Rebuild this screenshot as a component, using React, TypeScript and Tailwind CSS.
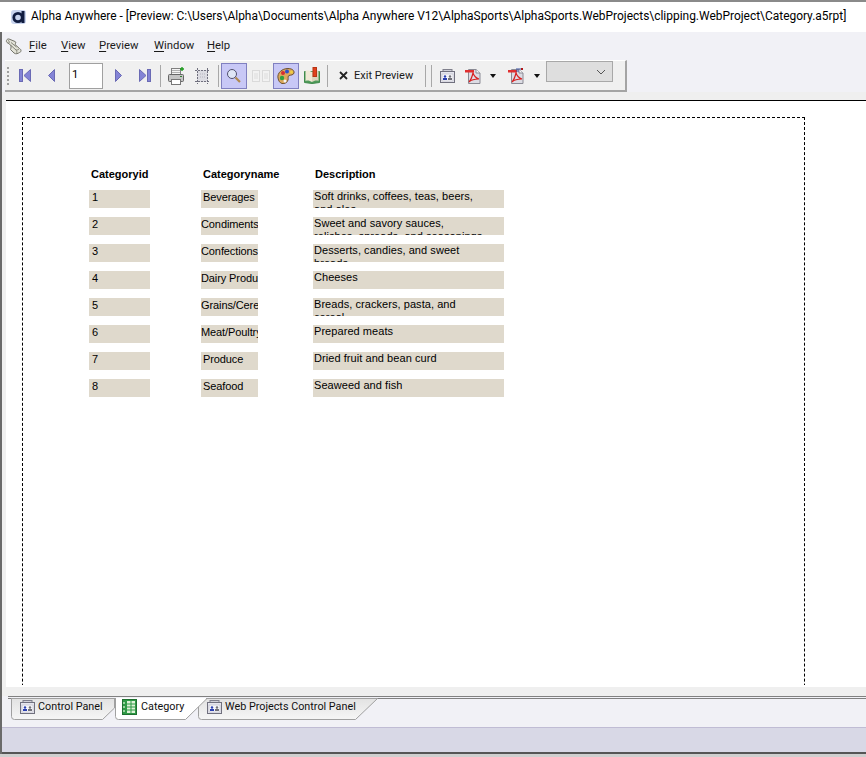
import React from "react";

const ui = "font-['Roboto','Noto_Sans',sans-serif] text-[11.3px] text-[#1a1a1a]";

function First() {
  return (
    <svg width="12" height="13" viewBox="0 0 12 13">
      <rect x="0.5" y="0.5" width="3" height="12" fill="#8484d6" stroke="#6a6ab4" />
      <path d="M11.5 0.5V12.5L5 6.5Z" fill="#8484d6" stroke="#6a6ab4" />
    </svg>
  );
}
function Last() {
  return (
    <svg width="12" height="13" viewBox="0 0 12 13">
      <rect x="8.5" y="0.5" width="3" height="12" fill="#8484d6" stroke="#6a6ab4" />
      <path d="M0.5 0.5V12.5L7 6.5Z" fill="#8484d6" stroke="#6a6ab4" />
    </svg>
  );
}
function Prev() {
  return (
    <svg width="7" height="13" viewBox="0 0 7 13">
      <path d="M6.5 0.5V12.5L0.5 6.5Z" fill="#8484d6" stroke="#6a6ab4" />
    </svg>
  );
}
function Next() {
  return (
    <svg width="7" height="13" viewBox="0 0 7 13">
      <path d="M0.5 0.5V12.5L6.5 6.5Z" fill="#8484d6" stroke="#6a6ab4" />
    </svg>
  );
}
function Sep() {
  return <div className="w-[1px] h-[22px] bg-[#a8a8a8]" />;
}
function Printer() {
  return (
    <svg width="17" height="18" viewBox="0 0 17 18">
      <rect x="3.5" y="1.5" width="9" height="6" fill="#f4f4f4" stroke="#808080" />
      <path d="M4 3.5h8M4 5.5h8" stroke="#b0b0b0" />
      <rect x="0.5" y="7.5" width="15" height="7" rx="1" fill="#c4c4c4" stroke="#666" />
      <rect x="3.5" y="12.5" width="9" height="5" fill="#fff" stroke="#777" />
      <rect x="12" y="9" width="2" height="1" fill="#2f7f2f" />
      <path d="M14 0v4M12 2h4" stroke="#1c9a1c" strokeWidth="1.4" />
    </svg>
  );
}
function Bounds() {
  return (
    <svg width="15" height="16" viewBox="0 0 15 16">
      <rect x="2" y="2" width="11" height="12" fill="#dcdce2" />
      <path d="M2.5 0v16M12.500 0v16M0 2.500h15M0 13.500h15" stroke="#70707e" strokeDasharray="2 1" />
      <path d="M5 6h5M5 9h5" stroke="#b4b4c0" strokeDasharray="1 1" />
    </svg>
  );
}
function Magnifier() {
  return (
    <svg width="16" height="16" viewBox="0 0 16 16">
      <circle cx="6" cy="6" r="4.5" fill="#dfe6f6" stroke="#50506e" />
      <path d="M9.5 9.5L14 14" stroke="#b08a50" strokeWidth="2.2" />
    </svg>
  );
}
function Pages() {
  return (
    <svg width="18" height="12" viewBox="0 0 18 12">
      <g fill="#f2f2f2" stroke="#dadada">
        <rect x="0.5" y="0.5" width="7" height="11" />
        <rect x="10.5" y="0.5" width="7" height="11" />
      </g>
      <path d="M2 4h4M2 6h4M2 8h4M12 4h4M12 6h4M12 8h4" stroke="#dcdcdc" />
    </svg>
  );
}
function Palette() {
  return (
    <svg width="18" height="16" viewBox="0 0 18 16">
      <path d="M1 10C0 5 5 .5 11 .5c4 0 6.500 2 6 4.500-.5 2-3 2-5 2.500-1.500.5-.5 2.500-1 4.500-.5 2.500-3.500 4-6 3.500C3 15 1.500 13 1 10Z" fill="#dca85c" stroke="#6e5230" />
      <circle cx="10" cy="3.500" r="2" fill="#2f50c8" />
      <circle cx="6" cy="5" r="2" fill="#d43030" />
      <circle cx="14.500" cy="4" r="1.500" fill="#f0d040" />
      <circle cx="5" cy="10" r="2.200" fill="#30a040" />
      <circle cx="8" cy="13" r="1.500" fill="#f4f4f4" />
    </svg>
  );
}
function Book() {
  return (
    <svg width="16" height="17" viewBox="0 0 16 17">
      <path d="M0.500 4.500V15.500L8 16.500L15.500 15.500V4.500Z" fill="#4f9a5a" stroke="#3f8a4a" />
      <path d="M1.500 4C4 3 6 4 8 5V15C6 14 4 13 1.500 14Z" fill="#efe8d4" />
      <path d="M14.500 4C12 3 10 4 8 5V15C10 14 12 13 14.500 14Z" fill="#dcd4bc" />
      <rect x="9" y="0.500" width="3.500" height="9" fill="#e0401c" stroke="#b83414" />
    </svg>
  );
}
function Panel() {
  return (
    <svg className="shrink-0" width="15" height="14" viewBox="0 0 15 14">
      <rect x="3" y="0.500" width="9" height="3" fill="#d0d0d8" stroke="#80808c" />
      <rect x="0.500" y="2.500" width="14" height="11" fill="#e6e6ee" stroke="#70707e" />
      <rect x="2" y="5" width="11" height="7" fill="#f6f6fa" stroke="#b0b0bc" strokeWidth="0.5" />
      <circle cx="5" cy="7.500" r="1.200" fill="#2a3fb0" />
      <rect x="3" y="9" width="4" height="2" fill="#2a3fb0" />
      <circle cx="10" cy="7.500" r="1.200" fill="#707078" />
      <rect x="8" y="9" width="4" height="2" fill="#707078" />
    </svg>
  );
}
function Pdf({ mail }: { mail?: boolean }) {
  return (
    <svg width="16" height="16" viewBox="0 0 16 16">
      <path d="M3.500 1.500H11L15 5V15.500H3.500Z" fill="#dcdce4" stroke="#8a8a94" />
      <path d="M11 1.500V5H15" fill="#f8f8f8" stroke="#8a8a94" />
      <rect x="0" y="2" width="9" height="2.500" fill="#e03030" />
      <path d="M8 5C7 9 5 13 4 14c2-2 6-3 10-3-3-1-5-3-6-6Z" fill="none" stroke="#d82020" strokeWidth="1.200" />
      {mail && <path d="M8 1h5M8 3h3" stroke="#3a50a0" />}
      {mail && <rect x="13" y="0" width="2" height="2" fill="#b01818" />}
    </svg>
  );
}
function Caret() {
  return (
    <svg width="6" height="4" viewBox="0 0 6 4">
      <path d="M0 0H6L3 4Z" fill="#111" />
    </svg>
  );
}
function Scroll() {
  return (
    <svg className="shrink-0" width="17" height="17" viewBox="0 0 17 17">
      <path d="M2 4.500C0.500 3 2 0.500 4 1L10 3.500C11.500 4 10.500 5.500 10 6.500L14.500 10.500C16.500 11.500 16.500 14 14.500 14.500C13 15.500 11 16.500 9 15L5.500 11.500C6 10 6.500 8 5.500 7C4.500 6 3.500 5.500 2 4.500Z" fill="#e2e2d8" stroke="#74746a" />
      <path d="M3 2.500C4 2.500 4.500 3.500 4 5M6 4.500L11.500 9M5.500 7L11 12M14 11C13 12 12 12 11 12C12 13 12 14 11.500 15.500" stroke="#85857a" fill="none" />
    </svg>
  );
}
function Logo() {
  return (
    <svg className="shrink-0" width="15" height="14" viewBox="0 0 15 14">
      <rect x="0" y="0" width="15" height="14" rx="3" fill="#c8d4ee" />
      <circle cx="7" cy="7.500" r="4.200" fill="none" stroke="#101c40" strokeWidth="2.800" />
      <rect x="10.500" y="1" width="3" height="12" fill="#101c40" />
    </svg>
  );
}
function Sheet() {
  return (
    <svg className="shrink-0" width="15" height="16" viewBox="0 0 15 16">
      <rect x="0.500" y="0.500" width="14" height="15" fill="#2f9a46" stroke="#1e7030" />
      <rect x="5" y="2" width="8" height="12" fill="#dff2d8" />
      <path d="M5 5h8M5 8h8M5 11h8M9 2v12" stroke="#2f9a46" />
      <path d="M2 3v2M2 7v2M2 11v2" stroke="#bfe6bf" strokeWidth="1.500" />
    </svg>
  );
}

function Menu({ k, rest, className }: { k: string; rest: string; className: string }) {
  return (
    <span className={className}>
      <span className="underline underline-offset-2">{k}</span>
      {rest}
    </span>
  );
}

const rows: [string, string, string, string, string][] = [
  ["1", "Beverages", "Soft drinks, coffees, teas, beers,", "and ales", "pl-[2px]"],
  ["2", "Condiments", "Sweet and savory sauces,", "relishes, spreads, and seasonings", "pl-0"],
  ["3", "Confections", "Desserts, candies, and sweet", "breads", "pl-0"],
  ["4", "Dairy Products", "Cheeses", "", "pl-0"],
  ["5", "Grains/Cereals", "Breads, crackers, pasta, and", "cereal", "pl-0"],
  ["6", "Meat/Poultry", "Prepared meats", "", "pl-0"],
  ["7", "Produce", "Dried fruit and bean curd", "", "pl-[2px]"],
  ["8", "Seafood", "Seaweed and fish", "", "pl-[2px]"],
];

export default function App() {
  return (
    <div className={`w-[866px] h-[757px] overflow-hidden bg-[#cfcfcf] flex flex-col ${ui}`}>
      <div className="h-[2px] bg-[#8a8a8a] shrink-0" />
      {/* title bar */}
      <div className="h-[30px] bg-white flex items-center pl-[11px] shrink-0">
        <Logo />
        <span className="ml-[5px] text-[11.950px] whitespace-nowrap text-black">
          Alpha Anywhere - [Preview: C:\Users\Alpha\Documents\Alpha Anywhere V12\AlphaSports\AlphaSports.WebProjects\clipping.WebProject\Category.a5rpt]
        </span>
      </div>
      <div className="flex flex-col border-l-2 border-[#6a6a6a] h-[722px] shrink-0">
        {/* menu */}
        <div className="h-[28px] bg-[#f1f1f6] flex items-center pl-[3px] shrink-0">
          <Scroll />
          <Menu k="F" rest="ile" className="ml-[7px] w-[32px]" />
          <Menu k="V" rest="iew" className="w-[38px]" />
          <Menu k="P" rest="review" className="w-[55px]" />
          <Menu k="W" rest="indow" className="w-[53px]" />
          <Menu k="H" rest="elp" className="" />
        </div>
        {/* toolbar row */}
        <div className="h-[32px] bg-[#f1f1f6] shrink-0 pl-[3px]">
          <div className="w-[622px] h-[32px] bg-[#f0f0f0] border-t border-r-2 border-b-2 border-[#a4a4a4] border-t-white flex items-center pl-[2px]">
            <div className="w-[2px] h-[18px] border-l-2 border-dotted border-[#a0a0a0]" />
            <div className="ml-[10px]"><First /></div>
            <div className="ml-[17px]"><Prev /></div>
            <div className="ml-[14px] w-[34px] h-[26px] bg-white border border-[#a0a0a0] flex items-center pl-[2px] text-black">1</div>
            <div className="ml-[12px]"><Next /></div>
            <div className="ml-[17px]"><Last /></div>
            <div className="ml-[9px]"><Sep /></div>
            <div className="ml-[7px]"><Printer /></div>
            <div className="ml-[10px]"><Bounds /></div>
            <div className="ml-[8px]"><Sep /></div>
            <div className="ml-[2px] w-[26px] h-[26px] bg-[#c8c8f6] border border-[#8080c0] flex items-center justify-center"><Magnifier /></div>
            <div className="ml-[5px]"><Pages /></div>
            <div className="ml-[3px] w-[26px] h-[26px] bg-[#c8c8f6] border border-[#8080c0] flex items-center justify-center"><Palette /></div>
            <div className="ml-[5px]"><Book /></div>
            <div className="ml-[7px]"><Sep /></div>
            <svg className="ml-[11px]" width="9" height="9" viewBox="0 0 9 9">
              <path d="M1 1L8 8M8 1L1 8" stroke="#222" strokeWidth="1.800" />
            </svg>
            <span className="ml-[6px] pt-px w-[60px] whitespace-nowrap text-[11px]">Exit Preview</span>
            <div className="ml-[11px]"><Sep /></div>
            <div className="ml-[5px]"><Sep /></div>
            <div className="ml-[8px]"><Panel /></div>
            <div className="ml-[10px]"><Pdf /></div>
            <div className="ml-[9px]"><Caret /></div>
            <div className="ml-[12px]"><Pdf mail /></div>
            <div className="ml-[10px]"><Caret /></div>
            <div className="ml-[6px] mb-[8px] w-[67px] h-[21px] bg-[#dedede] border border-[#a8a8a8] flex items-center justify-end pr-[6px]">
              <svg width="10" height="6" viewBox="0 0 10 6">
                <path d="M1 1L5 5L9 1" fill="none" stroke="#555" />
              </svg>
            </div>
          </div>
        </div>
        <div className="h-[8px] bg-[#efefef] shrink-0" />
        {/* page */}
        <div className="h-[587px] shrink-0 flex bg-[#f0f0f0]">
          <div className="w-[4px] shrink-0" />
          <div className="flex-1 bg-white border-t border-black">
            <div className="h-[584px] overflow-hidden pl-[16px] pt-[16px]">
              <div className="w-[783px] h-[700px] border border-dashed border-black pl-[66px] pt-[50px] font-['Liberation_Sans',Arial,sans-serif] text-[11px] leading-[13px] text-black">
                <div className="grid grid-cols-[112px_112px_191px] h-[12px] font-bold pl-[2px]">
                  <span>Categoryid</span>
                  <span>Categoryname</span>
                  <span>Description</span>
                </div>
                <div className="mt-[10px] flex flex-col gap-[9px]">
                  {rows.map((r) => (
                    <div key={r[0]} className="grid grid-cols-[112px_112px_191px] h-[18px]">
                      <div className="w-[61px] h-[18px] bg-[#dfd9cc] pl-[3px] pt-px overflow-hidden">{r[0]}</div>
                      <div className={`w-[57px] h-[18px] bg-[#dfd9cc] pt-px overflow-hidden whitespace-nowrap tracking-[-0.100px] ${r[4]}`}>{r[1]}</div>
                      <div className="h-[18px] bg-[#dfd9cc] pl-[1px] overflow-hidden tracking-[0.060px]">
                        <div className="whitespace-nowrap">{r[2]}</div>
                        <div className="whitespace-nowrap">{r[3]}</div>
                      </div>
                    </div>
                  ))}
                </div>
              </div>
            </div>
          </div>
        </div>
        {/* strip + tabs */}
        <div className="h-[9px] bg-[#efefef] shrink-0" />
        <div className="h-[31px] bg-[#f1f1f6] relative shrink-0 text-[10.800px]">
          <div className="h-[1px] bg-[#808080] ml-[6px]" />
          <div className="h-[1px] mt-[1px] bg-[#808080] ml-[6px]" />
          <svg className="absolute left-[-2px] top-0" width="400" height="26" viewBox="0 0 400 26">
            <defs>
              <linearGradient id="t" x1="0" y1="0" x2="0" y2="1">
                <stop offset="0" stopColor="#e2e2e2" />
                <stop offset="1" stopColor="#f6f6f6" />
              </linearGradient>
            </defs>
            <path d="M198.500 9.500V20.500Q198.500 23.500 201.500 23.500H355.500L377.500 2.500H206Z" fill="url(#t)" stroke="#a0a0a0" />
            <path d="M11.500 2.500V20.500Q11.500 23.500 14.500 23.500H102.500L114.500 12V2.500Z" fill="url(#t)" stroke="#a0a0a0" />
            <path d="M115.500 2.500V20.500Q115.500 23.500 118.500 23.500H185.500L207 2.500Z" fill="#fff" stroke="#a0a0a0" />
            <path d="M116 2.500H206" stroke="#fff" />
          </svg>
          <div className="absolute left-[18px] top-[3px] flex items-center h-[16px] text-[#101010]">
            <Panel />
            <span className="ml-[3px] w-[84px] whitespace-nowrap">Control Panel</span>
            <Sheet />
            <span className="ml-[4px] w-[66px] whitespace-nowrap">Category</span>
            <Panel />
            <span className="ml-[3px] whitespace-nowrap">Web Projects Control Panel</span>
          </div>
        </div>
        <div className="flex-1 bg-[#d8d8e6] border-t border-[#c0bcd4] border-b-2 border-b-[#555555]" />
      </div>
    </div>
  );
}
